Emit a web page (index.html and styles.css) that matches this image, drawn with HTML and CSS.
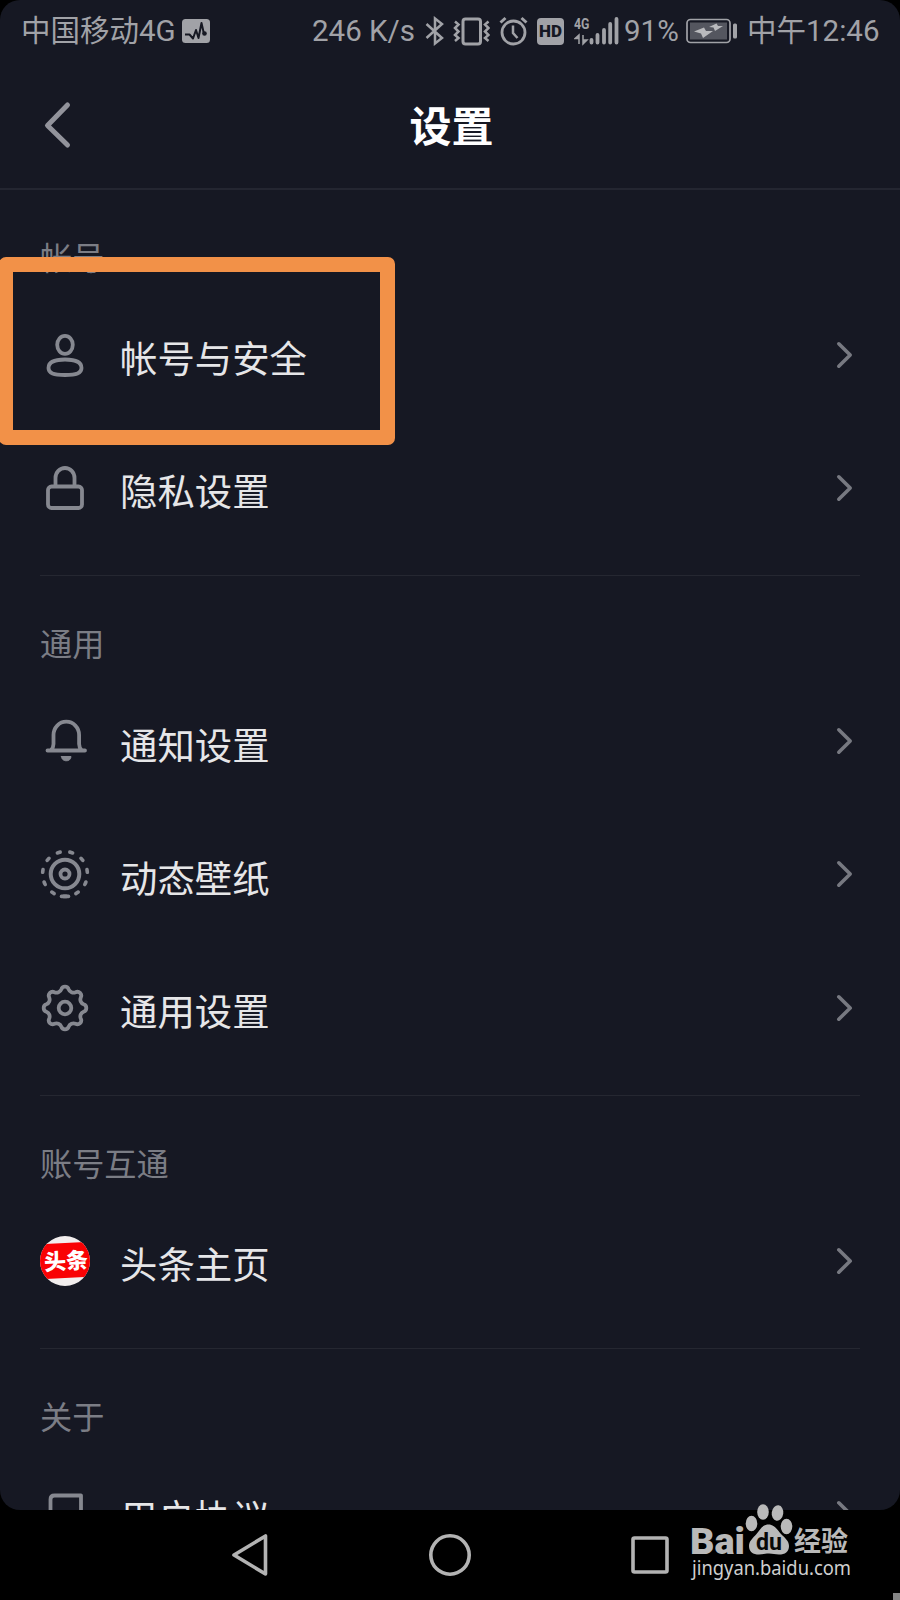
FILE: index.html
```
<!DOCTYPE html>
<html lang="zh-CN">
<head>
<meta charset="utf-8">
<title>设置</title>
<link rel="stylesheet" href="styles.css">
</head>
<body>
<svg class="defs" width="0" height="0">
  <symbol id="chevron" viewBox="0 0 20 30"><path d="M3.8 3.8 15.2 15 3.8 26.2"/></symbol>
</svg>
<div class="phone">
  <main class="screen">
    <div class="status">
      <span class="carrier">中国移动4G</span>
      <svg class="pulse" width="28" height="24" viewBox="0 0 28 24"><rect width="28" height="24" rx="3.5" fill="#a1a2a7"/><path d="M3 15.500h4.500l3.500 4 3-8.500 2.500 8L19.500 4l2.500 11" fill="none" stroke="#161823" stroke-width="2" stroke-linejoin="round"/><circle cx="22.500" cy="14.500" r="2.300" fill="#161823"/></svg>
      <span class="speed">246 K/s</span>
      <svg class="bt" width="20" height="30" viewBox="0 0 20 30"><path d="M1.500 8 17 22l-7 5.500V2.500L17 8 1.500 22"/></svg>
      <svg class="vib" width="37" height="30" viewBox="0 0 37 30"><rect x="10" y="3" width="17.500" height="25" rx="2.500" stroke-width="3"/><path d="M2 5.500 5.500 8.500 2 12l3.500 3.500L2 19l3.500 3L2 25M35.500 5.500 32 8.500l3.500 3.500-3.500 3.500 3.500 3.500-3.500 3 3.500 3"/></svg>
      <svg class="alarm" width="29" height="30" viewBox="0 0 29 30"><circle cx="14.500" cy="16.500" r="11.500" stroke-width="2.800"/><path d="M1.500 6.500 6.500 2M22.500 2l5 4.500" stroke-width="3"/><path d="M14 9.500v7.500l4.500 5"/></svg>
      <span class="hd">HD</span>
      <svg class="signal" width="46" height="30" viewBox="0 0 46 30"><text x="0" y="13" textLength="15.500" lengthAdjust="spacingAndGlyphs">4G</text><path d="M5 28V19L1 22.500h4M9 19v9l4-4H9" fill="#a1a2a7" stroke-width="1.500"/><path d="M17.500 24v2.500M23.500 19v7.500M30 14v12.500M36.200 8v18.500M42.500 3v23.500" stroke-width="3.800" stroke-linecap="round"/></svg>
      <span class="percent">91%</span>
      <svg class="battery" width="52" height="26" viewBox="0 0 52 26"><rect x="1" y="1.500" width="43" height="23" rx="3.500" stroke-width="1.700"/><rect x="4" y="4.500" width="37" height="17" fill="#54565f" stroke="none"/><path d="M8 13.500 18 9.500l2 3.500h7l-10 7-2-4.500zM23 9l7.500-3.500 1.500 2.500h5l-8 5-1.500-3.500z" fill="#b9babd" stroke="none"/><rect x="47" y="5.500" width="4" height="15" rx="1.500" fill="#a1a2a7" stroke="none"/></svg>
      <span class="clock">中午12:46</span>
    </div>
    <header class="header">
      <svg class="back" width="32" height="52" viewBox="0 0 32 52"><path d="M27.500 6 7.500 26.500 27.500 46"/></svg>
      <h1 class="title">设置</h1>
    </header>

    <section class="section">
      <h2 class="label">帐号</h2>
      <div class="row">
        <svg class="icon" viewBox="0 0 50 50"><ellipse cx="25" cy="14.800" rx="7.800" ry="9"/><path d="M25 29.500c10.500 0 16.500 3 16.500 8.500S36.500 45 25 45 8.500 43.500 8.500 38s6-8.500 16.500-8.500Z"/></svg>
        <span class="name">帐号与安全</span><svg class="go"><use href="#chevron"/></svg>
      </div>
      <div class="row">
        <svg class="icon" viewBox="0 0 50 50"><rect x="8" y="23.500" width="34" height="21.500" rx="3.500"/><path d="M15.500 23V15a9.500 10 0 0 1 19 0v8"/></svg>
        <span class="name">隐私设置</span><svg class="go"><use href="#chevron"/></svg>
      </div>
    </section>

    <section class="section">
      <h2 class="label">通用</h2>
      <div class="row">
        <svg class="icon" viewBox="0 0 50 50"><path d="M7.500 34.500h37.500M11 34c2-2 2.500-3 2.500-6V19a12.800 13.300 0 0 1 25.600 0v9c0 3 .5 4 2.500 6"/><path d="M21.500 40.500h9.500c0 5.800-9.500 5.800-9.500 0Z" fill="#868890" stroke-width="1"/></svg>
        <span class="name">通知设置</span><svg class="go"><use href="#chevron"/></svg>
      </div>
      <div class="row">
        <svg class="icon" viewBox="0 0 50 50"><circle cx="25" cy="25" r="14.300" stroke-width="4"/><circle cx="25" cy="25" r="4.500"/><circle cx="25" cy="25" r="22.400" pathLength="110" stroke-dasharray="2.200 7.800" stroke-dashoffset="1.100" stroke-width="3.600" transform="rotate(90 25 25)"/><path d="M21.500 47.400h7" stroke-width="3.600"/></svg>
        <span class="name">动态壁纸</span><svg class="go"><use href="#chevron"/></svg>
      </div>
      <div class="row">
        <svg class="icon" viewBox="-25 -25 50 50"><circle r="6.300" stroke-width="3.800"/><path d="M18.640-3.700A3.900 3.900 0 0 1 18.640 3.700A5.100 5.100 0 0 0 15.800 10.560A3.900 3.900 0 0 1 10.560 15.800A5.100 5.100 0 0 0 3.700 18.640A3.900 3.900 0 0 1-3.700 18.640A5.100 5.100 0 0 0-10.560 15.800A3.900 3.900 0 0 1-15.800 10.560A5.100 5.100 0 0 0-18.640 3.700A3.900 3.900 0 0 1-18.640-3.700A5.100 5.100 0 0 0-15.800-10.560A3.900 3.900 0 0 1-10.560-15.800A5.100 5.100 0 0 0-3.700-18.640A3.900 3.900 0 0 1 3.700-18.640A5.100 5.100 0 0 0 10.560-15.800A3.900 3.900 0 0 1 15.800-10.560A5.100 5.100 0 0 0 18.640-3.700Z"/></svg>
        <span class="name">通用设置</span><svg class="go"><use href="#chevron"/></svg>
      </div>
    </section>

    <section class="section">
      <h2 class="label">账号互通</h2>
      <div class="row">
        <span class="toutiao"><span class="toutiao-band">头条</span></span>
        <span class="name">头条主页</span><svg class="go"><use href="#chevron"/></svg>
      </div>
    </section>

    <section class="section">
      <h2 class="label">关于</h2>
      <div class="row">
        <svg class="icon" viewBox="0 0 50 50"><path d="M10.500 45V10.500q0-4 4-4h26.500v38.500Z"/></svg>
        <span class="name">用户协议</span><svg class="go"><use href="#chevron"/></svg>
      </div>
    </section>
  </main>

  <nav class="nav">
    <svg width="44" height="44" viewBox="0 0 44 44"><path d="M37.500 3v38L6 22Z"/></svg>
    <svg width="44" height="44" viewBox="0 0 44 44"><circle cx="22" cy="22" r="19.200"/></svg>
    <svg width="44" height="44" viewBox="0 0 44 44"><rect x="5" y="5" width="34" height="34" rx="1.500"/></svg>
  </nav>

  <div class="highlight"></div>
  <svg class="watermark" width="170" height="80" viewBox="0 0 170 80">
    <text class="wm-bai" x="0" y="49.500" textLength="55" lengthAdjust="spacingAndGlyphs">Bai</text>
    <ellipse cx="61.500" cy="19.500" rx="5.800" ry="7.700"/><ellipse cx="73" cy="8" rx="5.800" ry="7.700"/><ellipse cx="87.500" cy="9" rx="5.800" ry="7.700" transform="rotate(8 87.500 9)"/><ellipse cx="96.500" cy="22.500" rx="5.800" ry="7.700"/>
    <path d="M78.500 20.500c6 0 9 5.500 12.500 9.500 4 4 8 7 8 12 0 6-4 8.500-10 8.500-4 0-6-1-10-1s-6 1-10 1c-6 0-10-2.500-10-8.500 0-5 4-8 7.500-12 3.500-4.500 6-9.500 12-9.500Z"/>
    <text class="wm-du" x="66" y="45.500" textLength="26" lengthAdjust="spacingAndGlyphs">du</text>
    <text class="wm-jy" x="104" y="47" textLength="54" lengthAdjust="spacingAndGlyphs">经验</text>
    <text class="wm-url" x="2" y="71" textLength="159" lengthAdjust="spacingAndGlyphs">jingyan.baidu.com</text>
  </svg>
  <div class="corner"></div>
</div>
</body>
</html>
```
FILE: styles.css
```
* { box-sizing: border-box; }
body { margin: 0; background: #000; font-family: Roboto, "Noto Sans CJK SC", sans-serif; }
svg { display: block; flex: none; }
.defs { position: absolute; }
.phone { position: relative; width: 900px; height: 1600px; overflow: hidden; background: #000; }
.screen { height: 1510px; overflow: hidden; background: #161823; border-radius: 20px; }

.status { display: flex; align-items: center; height: 62px; padding-left: 21px; color: #a1a2a7; font-size: 29.5px; line-height: 64px; white-space: nowrap; }
.status svg { fill: none; stroke: #a1a2a7; stroke-width: 2.5; }
.status .pulse { stroke: none; }
.carrier { width: 161px; }
.speed { width: 105px; margin-left: 102px; }
.bt { margin-left: 8px; }
.vib { margin-left: 8px; }
.alarm { margin-left: 9px; }
.hd { width: 27px; height: 27px; margin-left: 9px; border-radius: 4px; background: #a1a2a7; color: #161823; font-size: 17px; font-weight: 900; line-height: 27px; text-align: center; }
.signal { margin-left: 10px; }
.signal text { fill: #a1a2a7; stroke: none; font-size: 15px; font-weight: 700; }
.percent { width: 55px; margin-left: 4px; }
.battery { margin-left: 7px; }
.clock { margin-left: 9px; }

.header { display: flex; align-items: center; height: 128px; padding: 0 40px; border-bottom: 2px solid #242631; }
.back { fill: none; stroke: #92939b; stroke-width: 5; stroke-linecap: round; stroke-linejoin: round; }
.title { flex: 1; margin: 0 32px 0 0; padding: 0 0 2px 3px; color: #fff; font-size: 42px; font-weight: 700; line-height: 62px; text-align: center; font-family: "Noto Sans CJK SC", sans-serif; }

.section { margin: 0 40px; padding-bottom: 20.700px; border-bottom: 1px solid #252731; }
.label { height: 98px; margin: 0; padding-top: 42px; color: #7b7d85; font-size: 32.200px; font-weight: 400; line-height: 48px; font-family: "Noto Sans CJK SC", sans-serif; }
.row { display: flex; align-items: center; height: 133.330px; padding-right: 5px; }
.icon { width: 50px; height: 50px; fill: none; stroke: #868890; stroke-width: 3.8; stroke-linecap: round; stroke-linejoin: round; }
.name { flex: 1; margin-left: 30px; padding-top: 5px; color: #e6e6e8; font-size: 37.400px; line-height: 50px; font-family: "Noto Sans CJK SC", sans-serif; }
.go { width: 20px; height: 30px; fill: none; stroke: #777981; stroke-width: 3.6; stroke-linecap: round; stroke-linejoin: round; }

.toutiao { display: flex; flex: none; align-items: center; width: 50px; height: 50px; overflow: hidden; border-radius: 50%; background: #f2eeee; }
.toutiao-band { flex: none; width: 54px; height: 35px; margin-left: -1px; background: #f90204; color: #fff; font: 900 22px/33px "Noto Sans CJK SC", sans-serif; text-align: center; transform: rotate(-3deg); }

.nav { display: flex; justify-content: center; align-items: center; gap: 156px; height: 90px; }
.nav svg { fill: none; stroke: #b3b3b3; stroke-width: 3.6; stroke-linejoin: round; }

.highlight { position: absolute; left: -1px; top: 257px; width: 396px; height: 188px; border: solid #f29148; border-width: 15px 15px 15px 14px; border-radius: 7px; }
.watermark { position: absolute; left: 690px; top: 1504px; fill: #b9b9b9; }
.wm-bai { font: 900 36px Roboto, sans-serif; }
.wm-du { font: 700 24px Roboto, sans-serif; fill: #080808; }
.wm-jy { font: 700 27px "Noto Sans CJK SC", sans-serif; }
.wm-url { font: 400 20px "Noto Sans", sans-serif; fill: #cfcfcf; }
.corner { position: absolute; right: 0; bottom: 0; width: 7px; height: 7px; background: #858585; }
```
